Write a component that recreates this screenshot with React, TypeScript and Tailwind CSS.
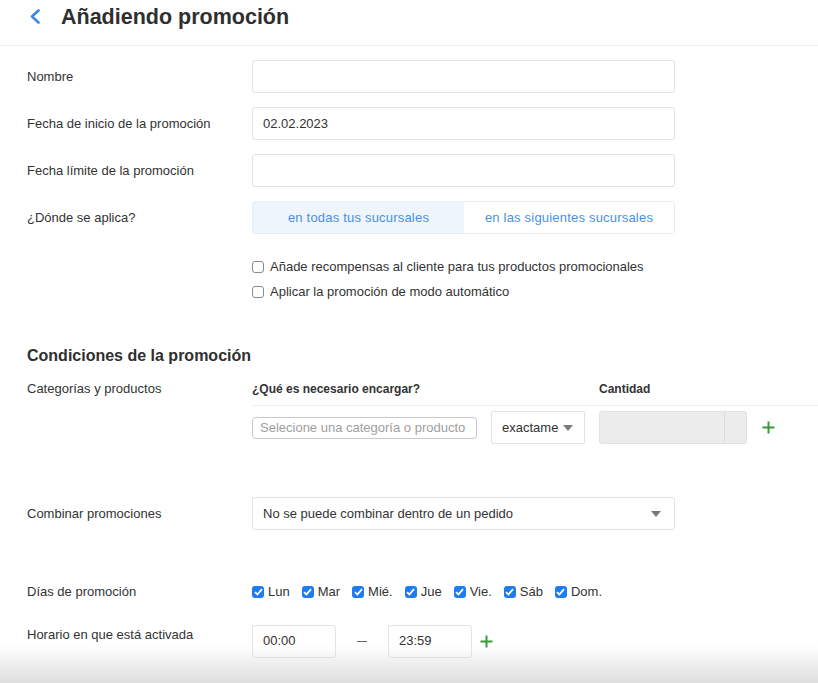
import React from "react";

const font = { fontFamily: '"Liberation Sans", Arial, sans-serif' };

function Caret() {
  return (
    <svg width="10" height="6" viewBox="0 0 10 6" className="shrink-0">
      <path d="M0 0 L10 0 L5 6 Z" fill="#7a7a7a" />
    </svg>
  );
}

function Plus() {
  return (
    <svg width="13" height="13" viewBox="0 0 13 13" className="shrink-0">
      <path d="M6.5 0.5 V12.5 M0.5 6.5 H12.5" stroke="#3b9a3b" strokeWidth="2" />
    </svg>
  );
}

function Box({ checked }: { checked?: boolean }) {
  if (checked) {
    return (
      <span className="w-[12px] h-[12px] rounded-[3px] bg-[#1f7cf0] flex items-center justify-center shrink-0">
        <svg width="9" height="8" viewBox="0 0 9 8">
          <path d="M1 4.2 L3.4 6.5 L8 1.2" stroke="white" strokeWidth="1.8" fill="none" />
        </svg>
      </span>
    );
  }
  return <span className="w-[12px] h-[12px] rounded-[3px] border border-[#8a8a8a] bg-white shrink-0" />;
}

function Row({ label, children, className = "" }: { label: string; children?: React.ReactNode; className?: string }) {
  return (
    <div className={`flex items-center ${className}`}>
      <div className="w-[225px] shrink-0 text-[13px] text-[#333]">{label}</div>
      {children}
    </div>
  );
}

const input = "w-[423px] h-[33px] border border-[#e2e2e2] rounded-[3px] bg-white flex items-center px-[10px] text-[13px] text-[#333]";

export default function App() {
  const days = ["Lun", "Mar", "Mié.", "Jue", "Vie.", "Sáb", "Dom."];
  return (
    <div className="relative w-[818px] h-[683px] bg-white overflow-hidden" style={font}>
      <div className="h-[46px] border-b border-[#efefef] flex items-start pt-[4px]">
        <div className="w-[61px] flex justify-start pl-[29px] pt-[5px]">
          <svg width="12" height="15" viewBox="0 0 12 15">
            <path d="M9.5 1.5 L3 7.5 L9.5 13.5" stroke="#3c8ae0" strokeWidth="2.6" fill="none" strokeLinecap="round" strokeLinejoin="round" />
          </svg>
        </div>
        <h1 className="text-[21.5px] font-bold text-[#2f2f2f] leading-[26px]">Añadiendo promoción</h1>
      </div>

      <div className="px-[27px]">
        <Row label="Nombre" className="mt-[14px]">
          <div className={input} />
        </Row>
        <Row label="Fecha de inicio de la promoción" className="mt-[14px]">
          <div className={input}>02.02.2023</div>
        </Row>
        <Row label="Fecha límite de la promoción" className="mt-[14px]">
          <div className={input} />
        </Row>
        <Row label="¿Dónde se aplica?" className="mt-[14px]">
          <div className="w-[423px] h-[33px] border border-[#e4edf8] rounded-[3px] flex text-[13px] text-[#4a90e2] tracking-[0.2px]">
            <div className="w-[211px] bg-[#eef5fd] flex items-center justify-center">en todas tus sucursales</div>
            <div className="flex-1 bg-white flex items-center justify-center">en las siguientes sucursales</div>
          </div>
        </Row>

        <div className="ml-[225px] mt-[26px] flex flex-col gap-[11px] text-[13px] text-[#333]">
          <div className="flex items-center gap-[6px] h-[14px]">
            <Box />
            <span>Añade recompensas al cliente para tus productos promocionales</span>
          </div>
          <div className="flex items-center gap-[6px] h-[14px]">
            <Box />
            <span>Aplicar la promoción de modo automático</span>
          </div>
        </div>

        <h2 className="mt-[47px] text-[16px] font-bold text-[#2f2f2f] leading-[20px]">Condiciones de la promoción</h2>

        <div className="flex mt-[15px]">
          <div className="w-[225px] shrink-0 text-[13px] text-[#333] leading-[16px]">Categorías y productos</div>
          <div className="flex-1 -mr-[27px]">
            <div className="flex text-[12px] font-bold text-[#333] leading-[16px] pb-[8px] border-b border-[#eeeeee]">
              <div className="w-[347px]">¿Qué es necesario encargar?</div>
              <div>Cantidad</div>
            </div>
            <div className="flex items-center mt-[5px]">
              <div className="w-[225px] h-[22px] border border-[#c9c9c9] rounded-[4px] flex items-center px-[7px] text-[13px] text-[#a0a0a0]">
                Selecione una categoría o producto
              </div>
              <div className="ml-[14px] w-[94px] h-[33px] border border-[#e2e2e2] rounded-[2px] flex items-center pl-[10px] gap-[5px] text-[13px] text-[#333]">
                <span>exactame</span>
                <Caret />
              </div>
              <div className="ml-[14px] w-[148px] h-[33px] border border-[#e2e2e2] rounded-[3px] bg-[#ececec] flex">
                <div className="w-[125px] border-r border-[#dcdcdc]" />
              </div>
              <div className="ml-[15px]">
                <Plus />
              </div>
            </div>
          </div>
        </div>

        <Row label="Combinar promociones" className="mt-[53px]">
          <div className={`${input} justify-between pr-[13px]`}>
            <span>No se puede combinar dentro de un pedido</span>
            <Caret />
          </div>
        </Row>

        <Row label="Días de promoción" className="mt-[52px]">
          <div className="flex items-center gap-[12px] text-[13px] text-[#333]">
            {days.map((d) => (
              <div key={d} className="flex items-center gap-[4px]">
                <Box checked />
                <span>{d}</span>
              </div>
            ))}
          </div>
        </Row>

        <div className="flex mt-[23px]">
          <div className="w-[225px] shrink-0 text-[13px] text-[#333]">Horario en que está activada</div>
          <div className="flex items-center">
            <div className="w-[84px] h-[33px] border border-[#e2e2e2] rounded-[3px] flex items-center px-[10px] text-[13px] text-[#333]">00:00</div>
            <div className="w-[52px] flex justify-center">
              <span className="w-[10px] h-[1px] bg-[#666]" />
            </div>
            <div className="w-[84px] h-[33px] border border-[#e2e2e2] rounded-[3px] flex items-center px-[10px] text-[13px] text-[#333]">23:59</div>
            <div className="ml-[8px]">
              <Plus />
            </div>
          </div>
        </div>
      </div>

      <div className="absolute left-0 right-0 bottom-0 h-[38px] bg-gradient-to-b from-[#ffffff00] to-[#dedede] pointer-events-none" />
    </div>
  );
}
